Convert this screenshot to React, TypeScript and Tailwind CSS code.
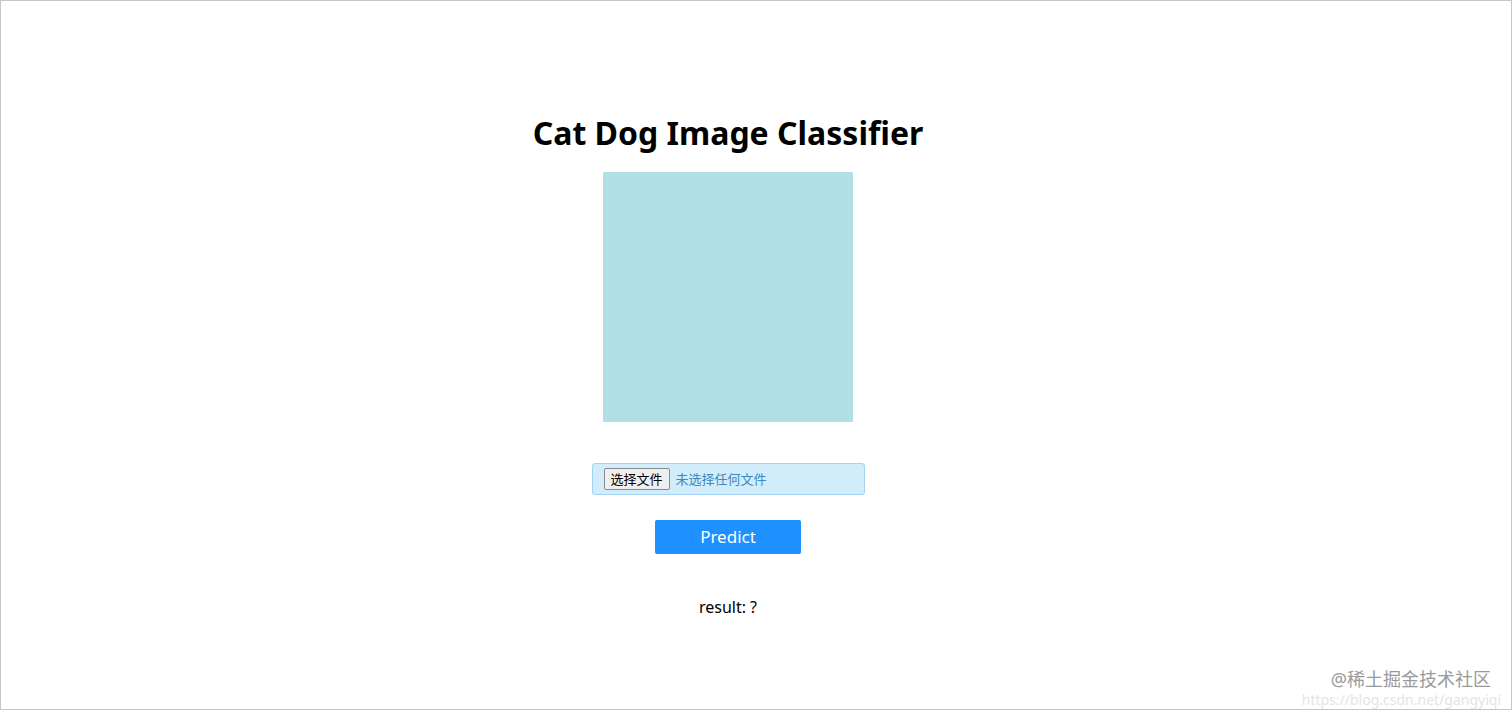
export default function App() {
  return (
    <div className="relative h-[710px] w-full border border-[#c6c6c6] bg-white font-['Noto_Sans','Noto_Sans_CJK_SC',sans-serif] text-black">
      <div className="flex flex-col items-center pr-[56px] pt-[110px]">
        <h1 className="text-[32px] font-bold leading-[44px]">Cat Dog Image Classifier</h1>
        <div className="mt-[17px] h-[250px] w-[250px] bg-[#b0e0e6]" />
        <div className="mt-[41px] flex h-[32px] w-[273px] items-center rounded-[3px] border border-[#a3d3f0] bg-[#d1ecfb] pl-[11px]">
          <span className="flex h-[22px] items-center rounded-[2px] border border-[#8a8a8a] bg-[#efefef] px-[6px] text-[13px] leading-none text-black">
            选择文件
          </span>
          <span className="ml-[6px] text-[13px] leading-none text-[#3c88c0]">未选择任何文件</span>
        </div>
        <button className="mt-[25px] flex h-[34px] w-[146px] items-center justify-center rounded-[2px] bg-[#1e90ff] text-[17px] text-white">
          Predict
        </button>
        <p className="mt-[42px] text-[16px] leading-[22px]">result: ?</p>
      </div>
      <div className="absolute bottom-[2px] right-[10px] flex flex-col items-end gap-[5px] leading-none">
        <span className="mr-[10px] text-[18px] leading-[18px] text-[#9a9a9a]">@稀土掘金技术社区</span>
        <span className="text-[14px] leading-[14px] text-[#e4e4e4]">https://blog.csdn.net/gangyiqi</span>
      </div>
    </div>
  );
}
